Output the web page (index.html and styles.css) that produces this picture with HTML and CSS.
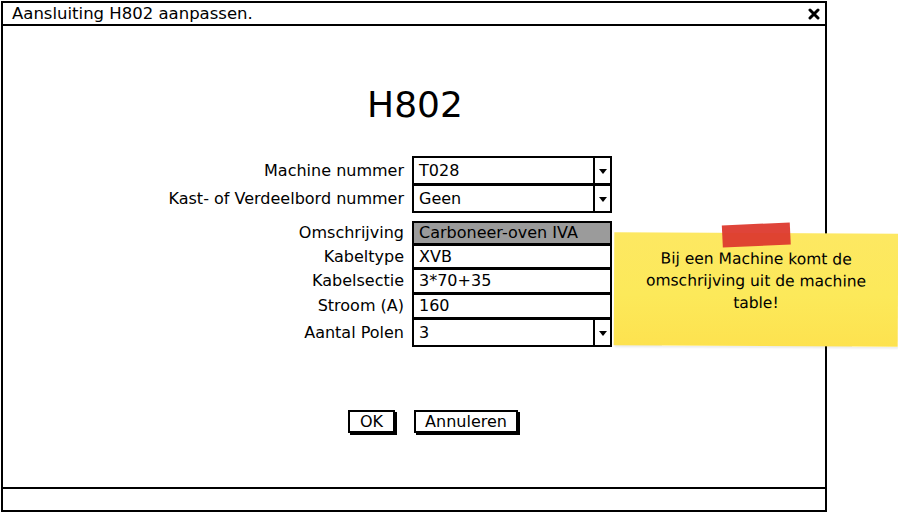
FILE: index.html
```html
<!DOCTYPE html>
<html>
<head>
<meta charset="utf-8">
<link rel="stylesheet" href="styles.css">
</head>
<body>
<div class="window">
  <div class="titlebar">
    <span class="title">Aansluiting H802 aanpassen.</span>
    <svg class="close" width="12" height="12" viewBox="0 0 12 12"><path d="M2 2 L10 10 M10 2 L2 10" stroke="#000" stroke-width="3" stroke-linecap="round"/></svg>
  </div>
  <div class="content">
    <h1 class="heading">H802</h1>
    <div class="group group-top">
      <div class="row r-tall"><span class="label">Machine nummer</span><div class="field select"><span class="val">T028</span><span class="drop"><svg width="8" height="5" viewBox="0 0 8 5"><path d="M0 0 H8 L4 5 Z" fill="#000"/></svg></span></div></div>
      <div class="row r-tall"><span class="label">Kast- of Verdeelbord nummer</span><div class="field select"><span class="val">Geen</span><span class="drop"><svg width="8" height="5" viewBox="0 0 8 5"><path d="M0 0 H8 L4 5 Z" fill="#000"/></svg></span></div></div>
    </div>
    <div class="group group-bottom">
      <div class="row r1"><span class="label">Omschrijving</span><div class="field disabled"><span class="val">Carboneer-oven IVA</span></div></div>
      <div class="row r2"><span class="label">Kabeltype</span><div class="field"><span class="val">XVB</span></div></div>
      <div class="row r3"><span class="label">Kabelsectie</span><div class="field"><span class="val">3*70+35</span></div></div>
      <div class="row r3"><span class="label">Stroom (A)</span><div class="field"><span class="val">160</span></div></div>
      <div class="row r-tall"><span class="label">Aantal Polen</span><div class="field select"><span class="val">3</span><span class="drop"><svg width="8" height="5" viewBox="0 0 8 5"><path d="M0 0 H8 L4 5 Z" fill="#000"/></svg></span></div></div>
    </div>
    <div class="buttons">
      <div class="btn btn-ok">OK</div>
      <div class="btn btn-cancel">Annuleren</div>
    </div>
  </div>
  <div class="statusbar"></div>
  <div class="note">
    <div class="tape"></div>
    <p class="note-text">Bij een Machine komt de omschrijving uit de machine table!</p>
  </div>
</div>
</body>
</html>
```

FILE: styles.css
```css
* { box-sizing: border-box; }
html, body { margin: 0; padding: 0; background: #fff; }
body {
  width: 898px;
  height: 513px;
  font-family: "DejaVu Sans", "Noto Sans", sans-serif;
  color: #000;
  overflow: hidden;
}
.window {
  position: relative;
  margin: 1px 0 0 1px;
  width: 826px;
  height: 511px;
  border: 2px solid #000;
  display: flex;
  flex-direction: column;
}
.titlebar {
  height: 23px;
  border-bottom: 2px solid #000;
  display: flex;
  align-items: center;
  justify-content: space-between;
  padding: 0 5px 0 9px;
  font-size: 16.5px;
}
.title { line-height: 20px; padding-top: 1px; }
.close { display: block; }
.content {
  flex: 1;
  display: flex;
  flex-direction: column;
}
.heading {
  margin: 57px 0 0 0;
  height: 44px;
  line-height: 44px;
  text-align: center;
  font-size: 36px;
  font-weight: normal;
  padding-left: 2px;
}
.group { display: flex; flex-direction: column; }
.group-top { margin-top: 29px; }
.group-bottom { margin-top: 8px; }
.row {
  display: flex;
  align-items: center;
  gap: 8px;
  height: auto;
}
.row + .row { margin-top: -1px; }
.label {
  width: 401px;
  text-align: right;
  font-size: 16px;
  line-height: 18px;
}
.field {
  width: 200px;
  height: 25px;
  border: 2px solid #000;
  background: #fff;
  display: flex;
  align-items: center;
  font-size: 16px;
  line-height: 18px;
  padding-left: 5px;
}
.r1 .field { height: 24px; }
.r2 .field { height: 25px; }
.r3 .field { height: 26px; }
.r-tall .field { height: 29px; }
.field.disabled { background: #9b9b9b; }
.val { flex: 1; }
.select { padding-right: 0; }
.drop {
  width: 17px;
  align-self: stretch;
  border-left: 2px solid #000;
  display: flex;
  align-items: center;
  justify-content: center;
  padding-top: 2px;
}
.drop svg { display: block; }
.buttons {
  margin-top: 63px;
  display: flex;
  gap: 19px;
  padding-left: 345px;
}
.btn {
  height: 23px;
  border: 2px solid #000;
  box-shadow: 2px 2px 0 #000;
  background: #fff;
  font-size: 16px;
  display: flex;
  align-items: center;
  justify-content: center;
}
.btn-ok { width: 47px; }
.btn-cancel { width: 104px; }
.statusbar {
  height: 23px;
  border-top: 2px solid #000;
  margin-top: auto;
}
.note {
  position: absolute;
  left: 611px;
  top: 230px;
  width: 284px;
  height: 113px;
  background: linear-gradient(180deg, #fde862 0%, #fce95a 55%, #fde24f 100%);
  box-shadow: 1px 2px 2px rgba(0,0,0,0.08);
  transform: rotate(0.3deg);
}
.tape {
  position: absolute;
  left: 108px;
  top: -9px;
  width: 68px;
  height: 22px;
  background: #dd3a2e;
  opacity: 0.95;
  transform: rotate(-3deg);
}
.note-text {
  margin: 15px 14px 0 14px;
  text-align: center;
  font-size: 15.5px;
  line-height: 22px;
}
```
